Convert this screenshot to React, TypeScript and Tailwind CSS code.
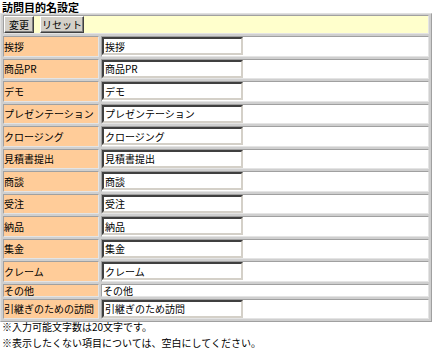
import React from "react";

const rows: { label: string; value: string; input: boolean }[] = [
  { label: "挨拶", value: "挨拶", input: true },
  { label: "商品PR", value: "商品PR", input: true },
  { label: "デモ", value: "デモ", input: true },
  { label: "プレゼンテーション", value: "プレゼンテーション", input: true },
  { label: "クロージング", value: "クロージング", input: true },
  { label: "見積書提出", value: "見積書提出", input: true },
  { label: "商談", value: "商談", input: true },
  { label: "受注", value: "受注", input: true },
  { label: "納品", value: "納品", input: true },
  { label: "集金", value: "集金", input: true },
  { label: "クレーム", value: "クレーム", input: true },
  { label: "その他", value: "その他", input: false },
  { label: "引継ぎのための訪問", value: "引継ぎのため訪問", input: true },
];

const cellBorder =
  "border border-t-[#a0a0a0] border-l-[#a0a0a0] border-b-[#e4e4e4] border-r-[#e4e4e4]";

const btn =
  "h-[17px] bg-[#d4d0c8] border border-t-white border-l-white border-b-[#404040] border-r-[#404040] shadow-[inset_-1px_-1px_0_#808080] text-[10px] leading-[12px] flex items-center justify-center";

export default function App() {
  return (
    <div
      className="w-[435px] h-[350px] overflow-hidden bg-white text-black text-[10px] leading-[12px]"
      style={{ fontFamily: '"Noto Sans CJK JP", "Noto Sans", sans-serif' }}
    >
      <div className="pl-[2px] h-[13px] text-[11px] font-bold leading-[14px]">訪問目的名設定</div>
      <div className="w-[432px] border border-t-[#e0e0e0] border-l-[#e0e0e0] border-b-[#a0a0a0] border-r-[#a0a0a0] bg-[#cfcfcf] px-[2px] pt-[1px] pb-[2px] flex flex-col gap-[2px]">
        <div className={`${cellBorder} bg-[#ffffcc] h-[19px] flex items-center gap-[6px]`}>
          <div className={`${btn} w-[30px]`}>変更</div>
          <div className={`${btn} w-[44px]`}>リセット</div>
        </div>
        {rows.map((r) => (
          <div
            key={r.label}
            className={`flex gap-[2px] ${r.input ? "h-[20.5px]" : "h-[13px]"}`}
          >
            <div
              className={`${cellBorder} bg-[#ffcc99] w-[96px] shrink-0 flex items-center whitespace-nowrap leading-[11px]`}
            >
              {r.label}
            </div>
            <div className={`${cellBorder} bg-white flex-1 flex items-center leading-[11px]`}>
              {r.input ? (
                <div className="w-[141px] h-[18px] border-2 border-t-[#404040] border-l-[#404040] border-b-[#d4d0c8] border-r-[#d4d0c8] bg-white pl-[1px] flex items-center">
                  {r.value}
                </div>
              ) : (
                <span className="pl-[1px]">{r.value}</span>
              )}
            </div>
          </div>
        ))}
      </div>
      <div className="pl-[2px] -mt-[3px] leading-[16px]">
        <div>※入力可能文字数は20文字です。</div>
        <div>※表示したくない項目については、空白にしてください。</div>
      </div>
    </div>
  );
}
